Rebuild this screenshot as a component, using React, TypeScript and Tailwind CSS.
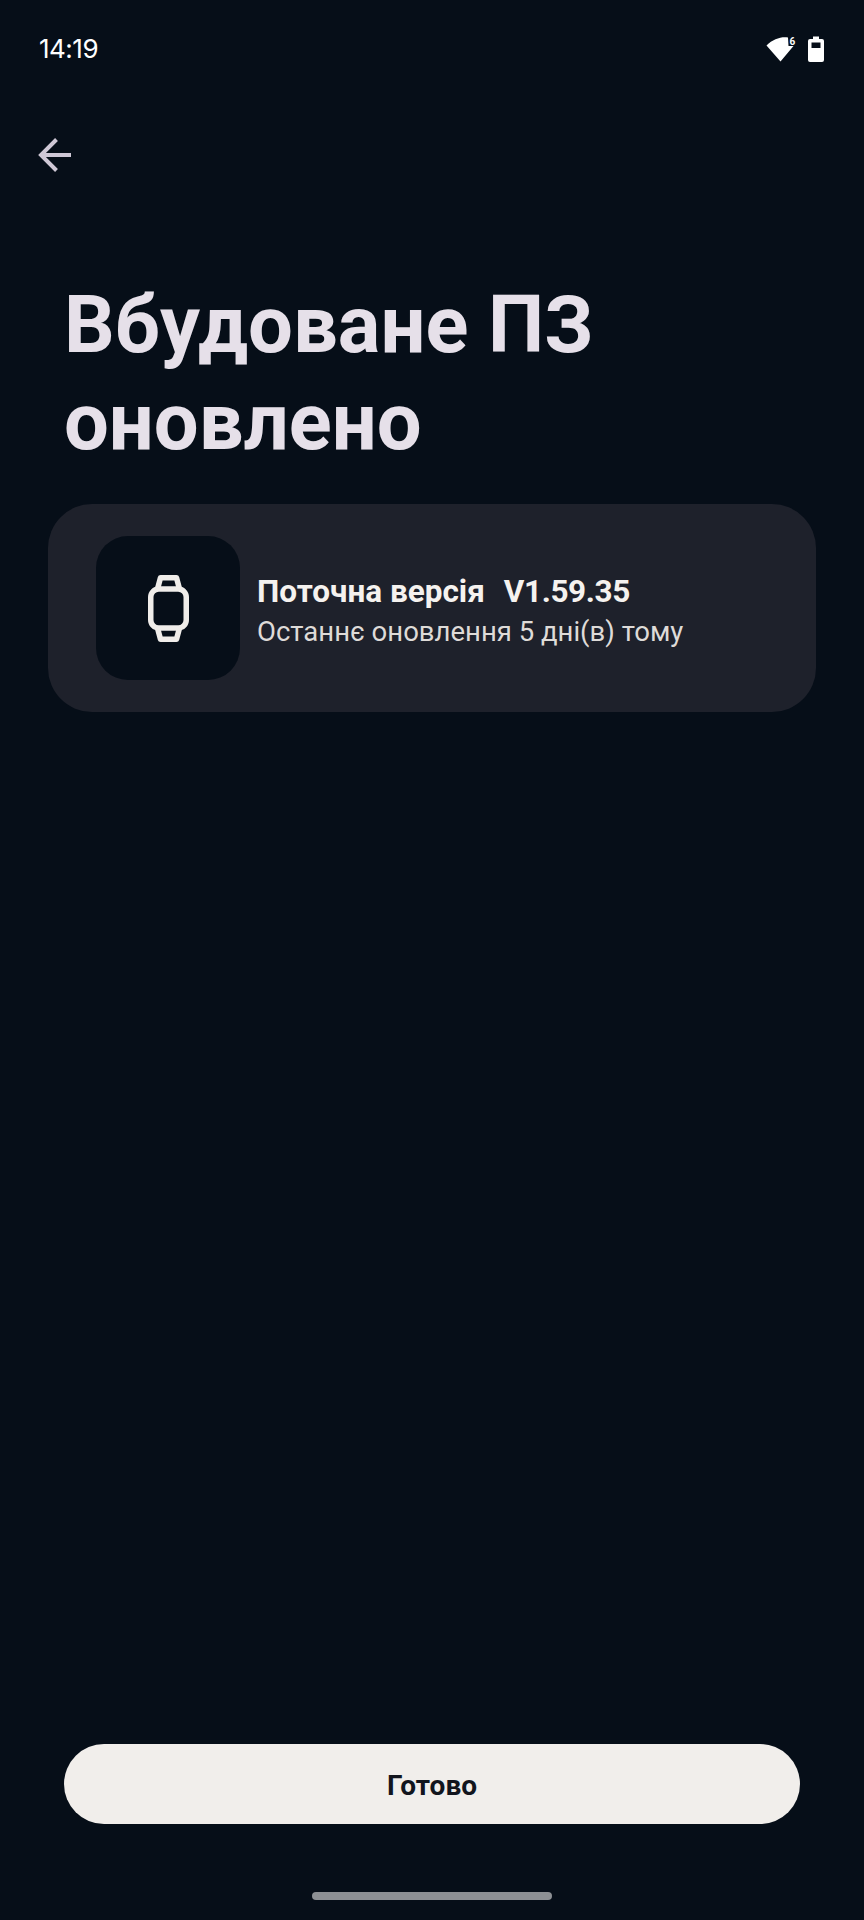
import React from 'react';

const WifiIcon = () => (
  <svg width="30" height="26" viewBox="0 0 30 26" className="block">
    <path d="M0.5 9.5 C 7 3 15 0.5 22 1.5 L 22.5 10 L 27.5 10 L 14.5 25.5 Z" fill="#fff" />
    <text x="23.5" y="9" fontSize="10" fontWeight="700" fill="#fff" fontFamily="Roboto, sans-serif">6</text>
  </svg>
);

const BatteryIcon = () => (
  <svg width="16" height="26" viewBox="0 0 16 26" className="block">
    <path
      fillRule="evenodd"
      d="M5 0.5 H11 V3 H14 A2 2 0 0 1 16 5 V24 A2 2 0 0 1 14 26 H2 A2 2 0 0 1 0 24 V5 A2 2 0 0 1 2 3 H5 Z M3.5 6.5 V12 H12.5 V6.5 Z"
      fill="#fff"
    />
  </svg>
);

const WatchIcon = () => (
  <svg width="41" height="67" viewBox="0 0 41 67" fill="none" stroke="#f0edea" strokeWidth="5.5" strokeLinejoin="round" className="block">
    <rect x="2.75" y="14" width="35.5" height="39" rx="8" />
    <path d="M9.5 14 L12.5 2.75 H28.5 L31.5 14" />
    <path d="M9.5 53 L12.5 64.25 H28.5 L31.5 53" />
  </svg>
);

const App: React.FC = () => {
  return (
    <div className="w-[864px] h-[1920px] bg-[#060e18] flex flex-col overflow-hidden font-['Roboto',sans-serif]">
      <div className="h-[64px] mt-[16px] pl-[39px] pr-[40px] flex items-center justify-between">
        <span className="text-white text-[26px] font-['Inter',sans-serif] font-normal tracking-[-0.5px]">14:19</span>
        <div className="flex items-center gap-[12px] pt-[1px]">
          <WifiIcon />
          <BatteryIcon />
        </div>
      </div>

      <div className="mt-[58px] pl-[38px]">
        <svg width="34" height="34" viewBox="0 0 34 34" fill="none" stroke="#cfc8d6" strokeWidth="4" className="block">
          <path d="M33 17 H3" />
          <path d="M18.5 1.5 L3 17 L18.5 32.5" />
        </svg>
      </div>

      <h1 className="mt-[104px] px-[64px] text-[#e6e0e9] text-[79.5px] leading-[97px] font-bold whitespace-nowrap">
        Вбудоване ПЗ
        <br />
        оновлено
      </h1>

      <div className="mt-[34px] mx-[48px] h-[208px] rounded-[44px] bg-[#1e212b] flex items-center pl-[48px]">
        <div className="w-[144px] h-[144px] rounded-[32px] bg-[#060e18] flex items-center justify-center">
          <WatchIcon />
        </div>
        <div className="ml-[17px] pt-[8px] flex flex-col">
          <div className="text-[#f5f2ef] text-[31.5px] leading-[40px] font-bold whitespace-nowrap">
            <span>Поточна версія</span>
            <span className="ml-[19px] tracking-[-0.4px]">V1.59.35</span>
          </div>
          <span className="text-[#dedbd8] text-[27.5px] leading-[40px]">Останнє оновлення 5 дні(в) тому</span>
        </div>
      </div>

      <div className="flex-1" />

      <div className="mx-[64px] h-[80px] rounded-full bg-[#f1eeeb] flex items-center justify-center">
        <span className="text-[#12151d] text-[28px] font-bold pt-[3px]">Готово</span>
      </div>

      <div className="mt-[68px] mb-[20px] mx-auto w-[240px] h-[8px] rounded-full bg-[#8d9094]" />
    </div>
  );
};

export default App;
